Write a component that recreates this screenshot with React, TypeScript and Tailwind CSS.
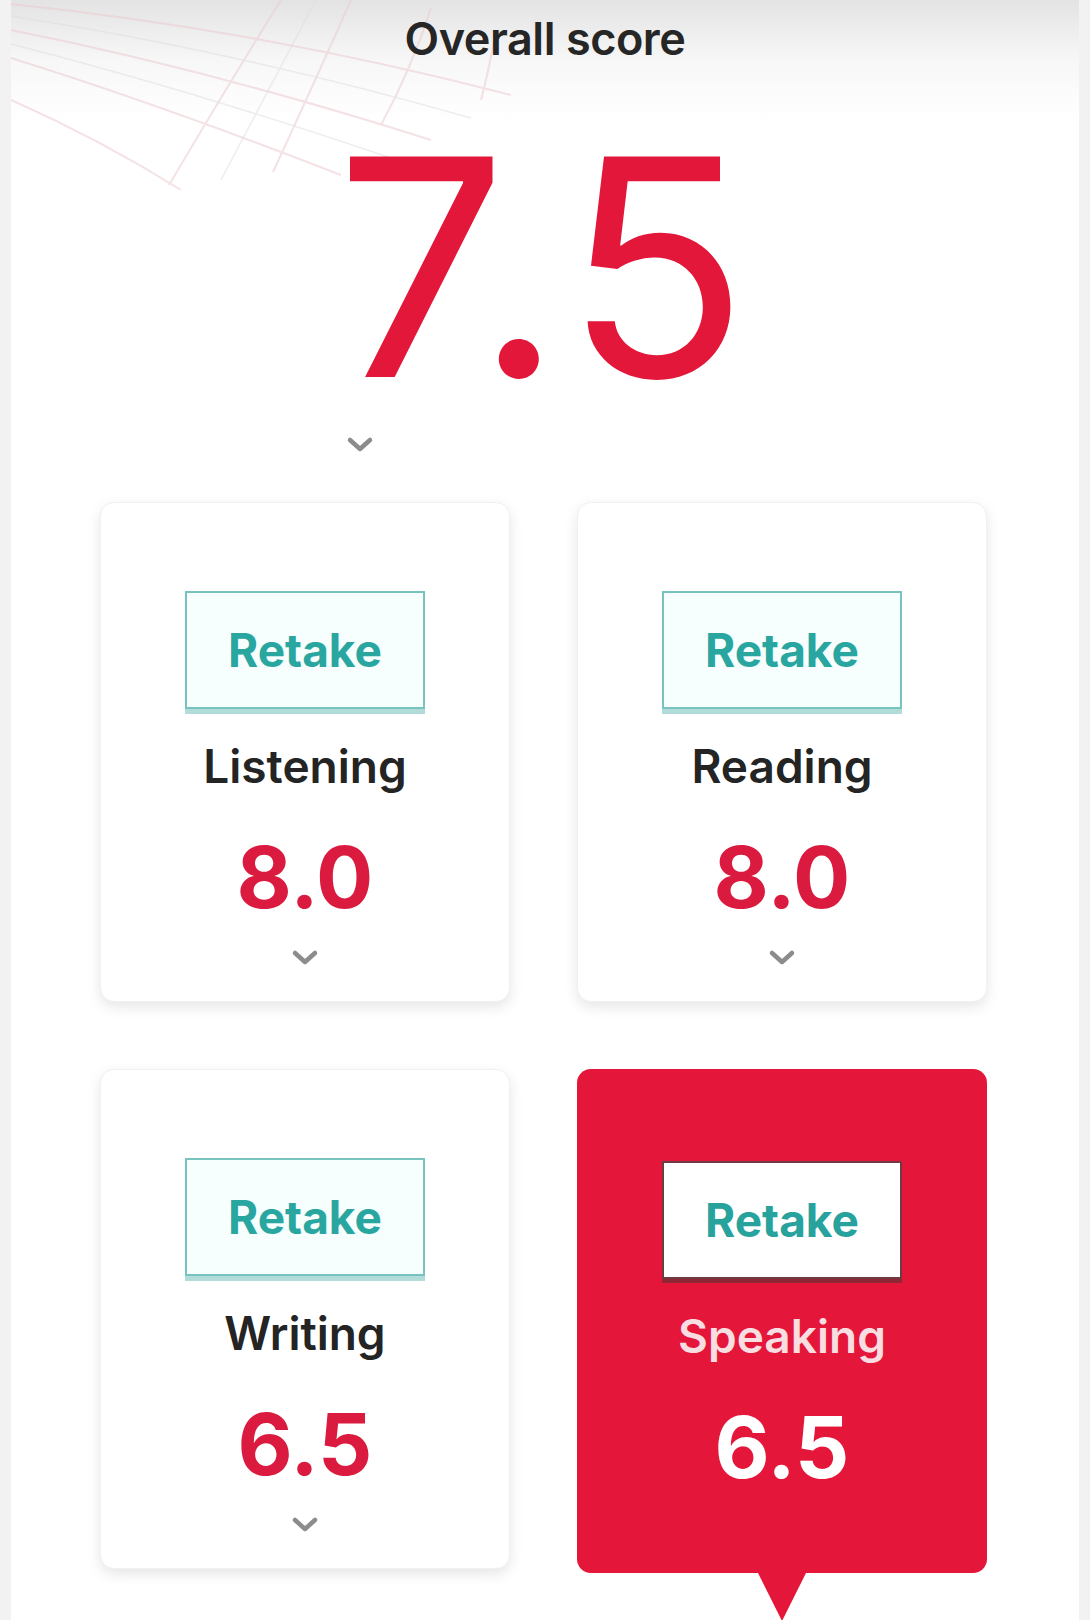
import React from 'react';

type Band = {
  name: string;
  score: string;
  active?: boolean;
};

const bands: Band[] = [
  { name: 'Listening', score: '8.0' },
  { name: 'Reading', score: '8.0' },
  { name: 'Writing', score: '6.5' },
  { name: 'Speaking', score: '6.5', active: true },
];

const Chevron: React.FC<{ className?: string }> = ({ className }) => (
  <svg className={className} viewBox="0 0 32 20" fill="none" stroke="currentColor" strokeWidth={4.5} strokeLinecap="round" strokeLinejoin="round">
    <path d="M6 5l10 9 10-9" />
  </svg>
);

// faint globe-like grid in the top left corner
const GridDecor: React.FC = () => (
  <svg className="absolute left-0 top-0 pointer-events-none" width="540" height="200" viewBox="0 0 540 200" fill="none">
    <g stroke="#eccbd0" strokeWidth={2} opacity={0.55}>
      <path d="M0 4 Q250 30 500 95" />
      <path d="M0 30 Q200 70 420 140" />
      <path d="M0 58 Q150 105 330 175" />
      <path d="M0 100 Q90 140 170 190" />
      <path d="M270 0 Q220 80 158 185" />
      <path d="M340 0 Q300 90 262 172" />
      <path d="M420 8 Q400 70 370 125" />
      <path d="M485 30 Q478 70 470 100" />
    </g>
    <g stroke="#dedede" strokeWidth={1.5} opacity={0.5}>
      <path d="M0 16 Q230 52 460 118" />
      <path d="M0 44 Q180 90 380 158" />
      <path d="M305 0 Q260 85 210 180" />
    </g>
  </svg>
);

const RetakeButton: React.FC<{ active?: boolean }> = ({ active }) => (
  <button
    className={
      active
        ? 'w-[240px] h-[118px] bg-white border-2 border-[#6f3a42] shadow-[0_4px_0_#8f2633] text-[#27a29d] text-[46px] font-bold leading-none'
        : 'w-[240px] h-[118px] bg-[#f6fefe] border-2 border-[#79c3be] shadow-[0_5px_0_#b2dcd9] text-[#2aa6a0] text-[46px] font-bold leading-none'
    }
  >
    Retake
  </button>
);

const BandCard: React.FC<{ band: Band }> = ({ band }) => (
  <div
    className={
      band.active
        ? 'relative h-[504px] rounded-[14px] bg-[#e4173a] flex flex-col items-center pt-[92px]'
        : 'relative h-[500px] rounded-[14px] bg-white shadow-[0_5px_14px_rgba(0,0,0,0.10)] border border-[#f1f1f1] flex flex-col items-center pt-[88px]'
    }
  >
    <RetakeButton active={band.active} />
    <div className={`mt-[34px] text-[46px] font-semibold leading-none ${band.active ? 'text-[#f8dde1]' : 'text-[#242424]'}`}>
      {band.name}
    </div>
    <div className={`mt-[46px] text-[85px] font-bold leading-none ${band.active ? 'text-white' : 'text-[#da1a3e]'}`}>
      {band.score}
    </div>
    {band.active ? (
      <div className="absolute left-1/2 top-full -translate-x-1/2 w-0 h-0 border-x-[24px] border-x-transparent border-t-[48px] border-t-[#e4173a]" />
    ) : (
      <Chevron className="mt-[28px] w-[32px] h-[20px] text-[#8c8c8c]" />
    )}
  </div>
);

export default function App() {
  return (
    <div
      className="relative w-[1090px] min-h-[1620px] overflow-hidden bg-[linear-gradient(to_bottom,#e3e3e3_0px,#f7f7f7_60px,#ffffff_120px)] border-x-[11px] border-x-[#f2f2f2]"
      style={{ fontFamily: 'Inter, "Noto Sans", sans-serif' }}
    >
      <GridDecor />
      <div className="relative flex flex-col items-center pt-[16px]">
        <h1 className="text-[45px] font-semibold leading-none text-[#262626] tracking-[-0.01em]">Overall score</h1>
        <div className="mt-[54px] text-[303px] font-normal leading-none text-[#e3173a] tracking-[0.02em]">7.5</div>
        <div className="w-full pl-[333px] mt-[17px]">
          <Chevron className="w-[32px] h-[20px] text-[#8c8c8c]" />
        </div>
      </div>
      <div className="relative grid grid-cols-2 gap-x-[67px] gap-y-[67px] pl-[89px] pr-[92px] mt-[47px] pb-[48px]">
        {bands.map((b) => (
          <BandCard key={b.name} band={b} />
        ))}
      </div>
    </div>
  );
}
